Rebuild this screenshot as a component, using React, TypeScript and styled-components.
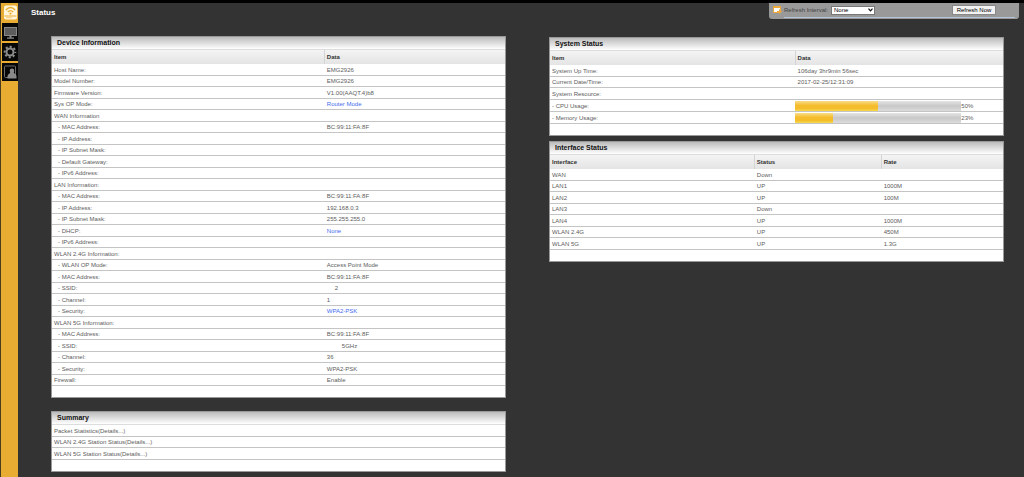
import React from 'react';
import styled, { createGlobalStyle } from 'styled-components';

const GlobalStyle = createGlobalStyle`
  * { box-sizing: border-box; }
  body {
    margin: 0;
    background: #333;
    font-family: 'Liberation Sans', Arial, sans-serif;
    font-size: 6px;
    line-height: 8px;
    color: #5c5c5c;
  }
`;

const Page = styled.div`
  display: flex;
  min-height: 100vh;
  border-top: 3px solid #000;
`;

const Sidebar = styled.nav`
  flex: none;
  display: flex;
  flex-direction: column;
  gap: 2px;
  width: 18px;
  background: #e8ac33;
  border-left: 1px solid #4a3c1e;
`;

const NavButton = styled.button<{ $active?: boolean }>`
  display: flex;
  align-items: center;
  justify-content: center;
  height: 18px;
  margin-left: 1px;
  padding: 0;
  border: 0;
  background: ${(p) => (p.$active ? '#e8ac33' : '#070707')};
  cursor: pointer;
`;

const Main = styled.main`
  flex: 1;
  min-width: 0;
`;

const TopBar = styled.header`
  display: flex;
  justify-content: space-between;
  align-items: flex-start;
  height: 33px;
  padding: 0 5px 0 13px;
`;

const PageTitle = styled.h1`
  margin: 5px 0 0;
  font-size: 8px;
  line-height: 10px;
  color: #fff;
`;

const Toolbar = styled.form`
  width: 250px;
  padding: 0 4px 1px 4px;
  background: #999;
  border-radius: 0 0 3px 3px;
`;

const ToolbarRow = styled.div`
  display: flex;
  align-items: center;
  height: 14px;
  padding-right: 19px;
`;

const ToolbarLine = styled.div`
  height: 1px;
  margin-left: 11px;
  background: #b4c4d8;
`;

const RefreshLabel = styled.label`
  margin: 0 3px 0 2px;
  color: #444;
`;

const SelectWrap = styled.span`
  display: grid;
  align-items: center;
  width: 44px;
  > * { grid-area: 1 / 1; }
  > svg { justify-self: end; margin-right: 2px; pointer-events: none; }
`;

const IntervalSelect = styled.select`
  appearance: none;
  width: 100%;
  height: 9px;
  padding: 0 2px;
  border: 1px solid #777;
  border-radius: 0;
  background: #fff;
  font: 6px/7px 'Liberation Sans', Arial, sans-serif;
  color: #000;
`;

const RefreshButton = styled.button`
  width: 44px;
  height: 10px;
  margin-left: auto;
  padding: 0;
  border: 1px solid #888;
  background: #f2f2f2;
  font: 6px/8px 'Liberation Sans', Arial, sans-serif;
  color: #000;
`;

const Columns = styled.div`
  display: grid;
  grid-template-columns: 1fr 1fr;
  align-items: start;
  gap: 43px;
  padding: 0 20px 6px 33px;
`;

const Column = styled.div<{ $gap: number; $top?: number }>`
  display: flex;
  flex-direction: column;
  gap: ${(p) => p.$gap}px;
  padding-top: ${(p) => p.$top ?? 0}px;
`;

const Panel = styled.section`
  padding-bottom: 11px;
  background: #fff;
  border: 1px solid #999;
`;

const PanelTitle = styled.h2`
  height: 13px;
  margin: 0;
  padding: 0 5px;
  border-bottom: 1px solid #ddd;
  background: linear-gradient(#bbb, #fff);
  font-size: 7px;
  line-height: 12px;
  color: #111;
`;

const Table = styled.table`
  width: 100%;
  table-layout: fixed;
  border-collapse: separate;
  border-spacing: 0;
`;

const HeadCell = styled.th<{ $width?: string }>`
  width: ${(p) => p.$width ?? 'auto'};
  height: 14px;
  padding: 0 2px;
  background: linear-gradient(#f4f4f4, #e4e4e4);
  text-align: left;
  color: #333;
  th + & { border-left: 1px solid #d4d4d4; }
`;

const Row = styled.tr<{ $tall?: boolean }>`
  height: 12px;
  &:nth-child(even) { height: ${(p) => (p.$tall ? 12 : 11)}px; }
`;

const Cell = styled.td<{ $indent?: boolean; $flush?: boolean }>`
  padding: 0 0 0 ${(p) => (p.$indent ? 6 : 2)}px;
  border-bottom: 1px solid #c4c4c4;
  white-space: pre;
  td + & { padding-left: ${(p) => (p.$flush ? 0 : 3)}px; }
`;

const DataLink = styled.a`
  color: #3f6bf0;
  text-decoration: none;
`;

const PlainLink = styled.a`
  color: inherit;
  text-decoration: none;
`;

const Value = styled.span<{ $shift: number }>`
  padding-left: ${(p) => p.$shift}px;
`;

const Meter = styled.div`
  display: flex;
  align-items: center;
`;

const Track = styled.div`
  width: 80%;
  height: 10px;
  background: linear-gradient(#e4e4e4, #c8c8c8 50%, #dcdcdc);
`;

const Fill = styled.div`
  height: 100%;
  background: linear-gradient(#f8dc88, #f5bd2c 45%, #f5bd2c 75%, #f6dc50);
`;

type Info = { label: string; value?: string; link?: boolean; sub?: boolean; shift?: number };

const MAC = 'BC:99:11:FA:8F';

const deviceInfo: Info[] = [
  { label: 'Host Name:', value: 'EMG2926' },
  { label: 'Model Number:', value: 'EMG2926' },
  { label: 'Firmware Version:', value: 'V1.00(AAQT.4)b8' },
  { label: 'Sys OP Mode:', value: 'Router Mode', link: true },
  { label: 'WAN Information' },
  { label: 'MAC Address:', value: MAC, sub: true },
  { label: 'IP Address:', sub: true },
  { label: 'IP Subnet Mask:', sub: true },
  { label: 'Default Gateway:', sub: true },
  { label: 'IPv6 Address:', sub: true },
  { label: 'LAN Information:' },
  { label: 'MAC Address:', value: MAC, sub: true },
  { label: 'IP Address:', value: '192.168.0.3', sub: true },
  { label: 'IP Subnet Mask:', value: '255.255.255.0', sub: true },
  { label: 'DHCP:', value: 'None', link: true, sub: true },
  { label: 'IPv6 Address:', sub: true },
  { label: 'WLAN 2.4G Information:' },
  { label: 'WLAN OP Mode:', value: 'Access Point Mode', sub: true },
  { label: 'MAC Address:', value: MAC, sub: true },
  { label: 'SSID:', value: '2', sub: true, shift: 8 },
  { label: 'Channel:', value: '1', sub: true },
  { label: 'Security:', value: 'WPA2-PSK', link: true, sub: true },
  { label: 'WLAN 5G Information:' },
  { label: 'MAC Address:', value: MAC, sub: true },
  { label: 'SSID:', value: '5GHz', sub: true, shift: 15 },
  { label: 'Channel:', value: '36', sub: true },
  { label: 'Security:', value: 'WPA2-PSK', sub: true },
  { label: 'Firewall:', value: 'Enable' },
];

const interfaces = [
  ['WAN', 'Down', ''],
  ['LAN1', 'UP', '1000M'],
  ['LAN2', 'UP', '100M'],
  ['LAN3', 'Down', ''],
  ['LAN4', 'UP', '1000M'],
  ['WLAN 2.4G', 'UP', '450M'],
  ['WLAN 5G', 'UP', '1.3G'],
];

const usage = [
  { label: 'CPU Usage:', percent: 50 },
  { label: 'Memory Usage:', percent: 23 },
];

const summary = [
  'Packet Statistics(Details...)',
  'WLAN 2.4G Station Status(Details...)',
  'WLAN 5G Station Status(Details...)',
];

const RouterIcon = () => (
  <svg width="15" height="16" viewBox="0 0 15 16">
    <rect x="1" y="1.500" width="13" height="14" rx="2" fill="#fff6dc" />
    <path d="M1.500 12h12" stroke="#e8ac33" />
    <path d="M3 13.700h6" stroke="#f0c468" strokeWidth=".8" />
    <g fill="none" stroke="#e8ac33" strokeWidth="1.300">
      <path d="M2.800 6Q7.500 1 12.200 6M4.800 8Q7.500 5.300 10.200 8" />
    </g>
    <circle cx="7.500" cy="9.600" r="1.100" fill="#e8ac33" />
  </svg>
);

const MonitorIcon = () => (
  <svg width="15" height="15" viewBox="0 0 15 15">
    <rect x="1.500" y="2.500" width="12" height="8" fill="#5c5c5c" stroke="#888" />
    <path d="M6.500 10.500h2v2h2.500v1.300h-7v-1.300h2.500z" fill="#888" />
  </svg>
);

const GearIcon = () => (
  <svg width="14" height="14" viewBox="0 0 14 14">
    <g stroke="#8c8c8c" fill="none">
      <circle cx="7" cy="7" r="3.500" strokeWidth="2" />
      <circle cx="7" cy="7" r="5.300" strokeWidth="2" strokeDasharray="2.100 2.063" strokeDashoffset="1" />
    </g>
  </svg>
);

const UserIcon = () => (
  <svg width="14" height="16" viewBox="0 0 14 16">
    <path d="M5 13.500H2.500q-1 0-1-1V3q0-1 1-1H11.500q1 0 1 1V12" fill="none" stroke="#6c6c6c" />
    <path d="M9 4.500c1.800 0 2.400 1.300 2.200 2.800-.1.900-.5 1.200-.3 1.700.3.600 2.600 1.200 2.600 3.200v2.300H4.500v-2.300c0-2 2.300-2.600 2.600-3.200.2-.5-.2-.8-.3-1.700C6.600 5.800 7.200 4.500 9 4.500z" fill="#8a8a8a" />
  </svg>
);

const RefreshIcon = () => (
  <svg width="9" height="8" viewBox="0 0 9 8">
    <rect x=".5" y=".5" width="7" height="6" fill="#fff" stroke="#eda93c" />
    <path d="M0 0h8v2H0z" fill="#eda93c" />
    <path d="M4 5h2V3l3 2.500L6 8V7H4z" fill="#eda93c" />
  </svg>
);

const ChevronIcon = () => (
  <svg width="5" height="4" viewBox="0 0 5 4">
    <path d="M.5.700L2.500 2.900 4.500.700" fill="none" stroke="#111" strokeWidth="1.200" />
  </svg>
);

export default function App() {
  return (
    <>
      <GlobalStyle />
      <Page>
        <Sidebar aria-label="Sections">
          <NavButton $active aria-label="Status"><RouterIcon /></NavButton>
          <NavButton aria-label="Monitor"><MonitorIcon /></NavButton>
          <NavButton aria-label="Configuration"><GearIcon /></NavButton>
          <NavButton aria-label="Maintenance"><UserIcon /></NavButton>
        </Sidebar>
        <Main>
          <TopBar>
            <PageTitle>Status</PageTitle>
            <Toolbar>
              <ToolbarRow>
                <RefreshIcon />
                <RefreshLabel htmlFor="interval">Refresh Interval:</RefreshLabel>
                <SelectWrap>
                  <IntervalSelect id="interval" defaultValue="None">
                    <option>None</option>
                  </IntervalSelect>
                  <ChevronIcon />
                </SelectWrap>
                <RefreshButton type="button">Refresh Now</RefreshButton>
              </ToolbarRow>
              <ToolbarLine />
            </Toolbar>
          </TopBar>
          <Columns>
            <Column $gap={13}>
              <Panel>
                <PanelTitle>Device Information</PanelTitle>
                <Table>
                  <thead>
                    <tr>
                      <HeadCell $width="60%">Item</HeadCell>
                      <HeadCell>Data</HeadCell>
                    </tr>
                  </thead>
                  <tbody>
                    {deviceInfo.map((d, i) => (
                      <Row key={i}>
                        <Cell $indent={d.sub}>{d.sub ? `- ${d.label}` : d.label}</Cell>
                        <Cell>
                          {d.link ? (
                            <DataLink href="#">{d.value}</DataLink>
                          ) : (
                            <Value $shift={d.shift ?? 0}>{d.value}</Value>
                          )}
                        </Cell>
                      </Row>
                    ))}
                  </tbody>
                </Table>
              </Panel>
              <Panel>
                <PanelTitle>Summary</PanelTitle>
                <Table>
                  <tbody>
                    {summary.map((s) => (
                      <Row key={s}>
                        <Cell><PlainLink href="#">{s}</PlainLink></Cell>
                      </Row>
                    ))}
                  </tbody>
                </Table>
              </Panel>
            </Column>
            <Column $gap={5} $top={1}>
              <Panel>
                <PanelTitle>System Status</PanelTitle>
                <Table>
                  <thead>
                    <tr>
                      <HeadCell $width="54%">Item</HeadCell>
                      <HeadCell>Data</HeadCell>
                    </tr>
                  </thead>
                  <tbody>
                    <Row>
                      <Cell>System Up Time:</Cell>
                      <Cell>106day 3hr9min 56sec</Cell>
                    </Row>
                    <Row>
                      <Cell>Current Date/Time:</Cell>
                      <Cell>2017-02-25/12:31:09</Cell>
                    </Row>
                    <Row>
                      <Cell>System Resource:</Cell>
                      <Cell />
                    </Row>
                    {usage.map((u) => (
                      <Row key={u.label} $tall>
                        <Cell>{`- ${u.label}`}</Cell>
                        <Cell $flush>
                          <Meter>
                            <Track>
                              <Fill style={{ width: `${u.percent}%` }} />
                            </Track>
                            {u.percent}%
                          </Meter>
                        </Cell>
                      </Row>
                    ))}
                  </tbody>
                </Table>
              </Panel>
              <Panel>
                <PanelTitle>Interface Status</PanelTitle>
                <Table>
                  <thead>
                    <tr>
                      <HeadCell $width="45%">Interface</HeadCell>
                      <HeadCell $width="28%">Status</HeadCell>
                      <HeadCell>Rate</HeadCell>
                    </tr>
                  </thead>
                  <tbody>
                    {interfaces.map((r) => (
                      <Row key={r[0]}>
                        <Cell>{r[0]}</Cell>
                        <Cell>{r[1]}</Cell>
                        <Cell>{r[2]}</Cell>
                      </Row>
                    ))}
                  </tbody>
                </Table>
              </Panel>
            </Column>
          </Columns>
        </Main>
      </Page>
    </>
  );
}
